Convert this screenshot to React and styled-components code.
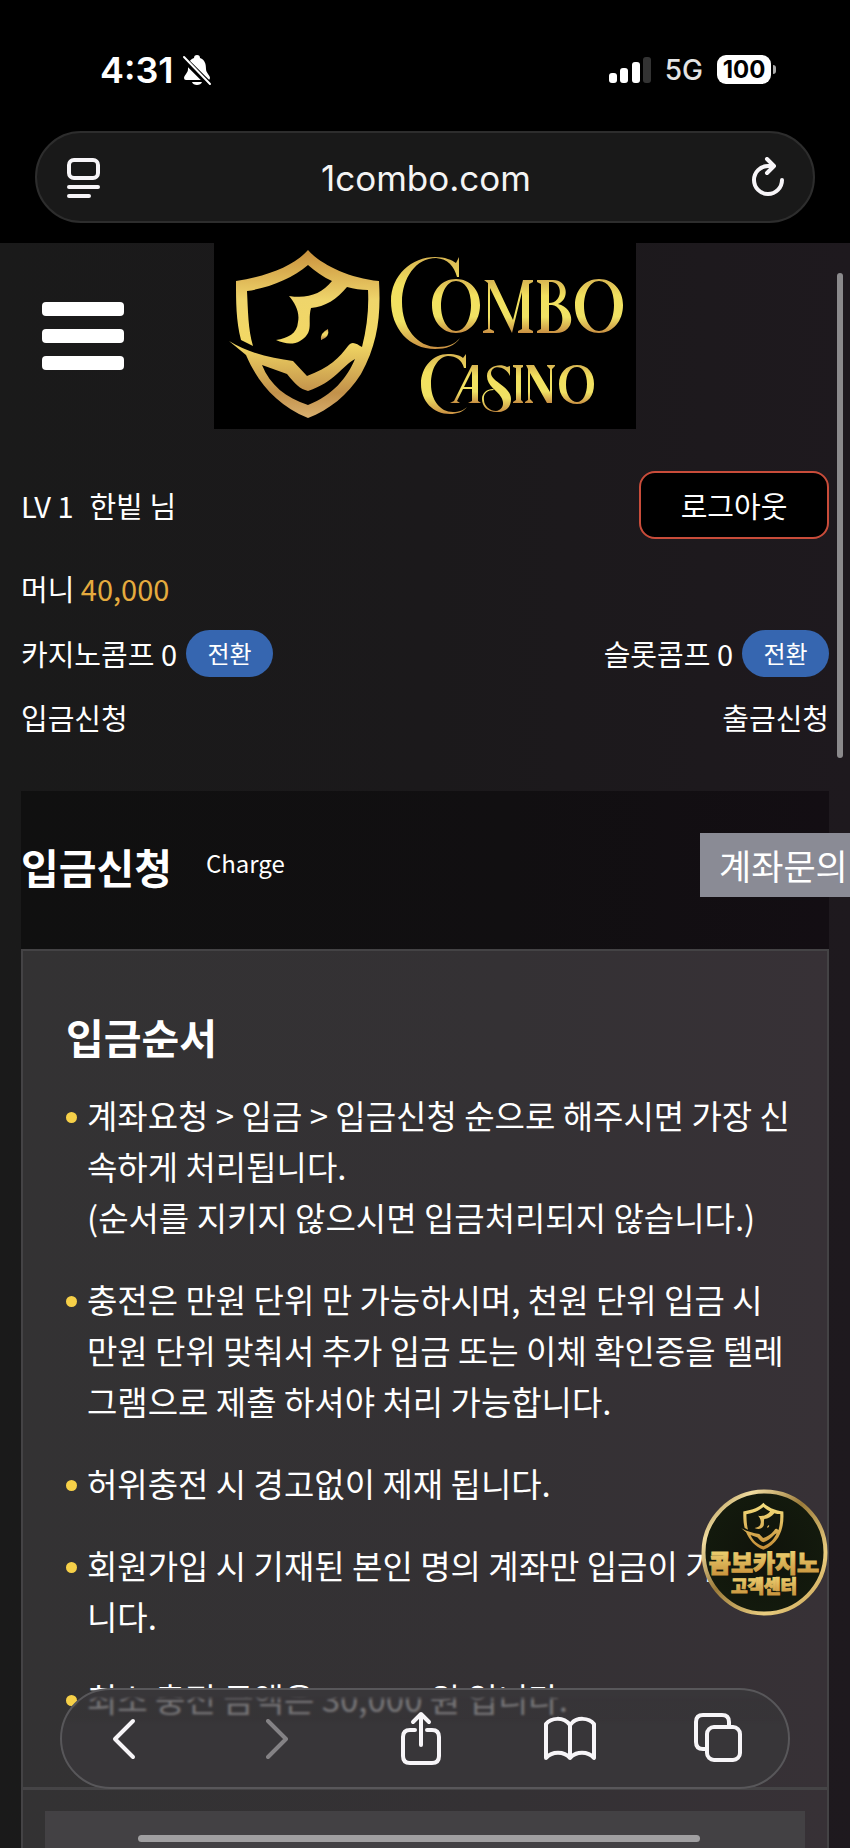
import React from "react";
import styled, { createGlobalStyle } from "styled-components";

const Global = createGlobalStyle`
  *, *::before, *::after { box-sizing: border-box; }
  html { background: #1a1a1a; }
  body { margin: 0; color: #fff; font-family: "Noto Sans CJK KR", "Noto Sans", sans-serif; }
  button { font-family: inherit; color: inherit; cursor: pointer; }
  h1, h2, p, ul { margin: 0; padding: 0; }
  a { color: inherit; text-decoration: none; }
`;

const Screen = styled.div`
  height: 100vh;
  overflow: hidden;
  position: relative;
  display: flex;
  flex-direction: column;
  background: #000;
`;

const StatusBar = styled.header`
  flex: none;
  height: 131px;
  padding: 8px 75px 0 100px;
  display: flex;
  align-items: center;
  justify-content: space-between;
  font-family: Inter, sans-serif;
`;

const StatusGroup = styled.div`
  display: flex;
  align-items: center;
  gap: ${(p) => p.$gap}px;
`;

const Clock = styled.span`
  font-size: 36px;
  font-weight: 600;
`;

const Network = styled.span`
  font-size: 28px;
  font-weight: 500;
  color: #e4e4e4;
`;

const Battery = styled.span`
  position: relative;
  width: 54px;
  height: 29px;
  margin-right: 4px;
  border-radius: 9px;
  background: #fff;
  color: #000;
  font-size: 24px;
  font-weight: 700;
  line-height: 29px;
  text-align: center;
  &::after {
    content: "";
    position: absolute;
    right: -5px;
    top: 10px;
    width: 3px;
    height: 9px;
    border-radius: 0 3px 3px 0;
    background: #aaa;
  }
`;

const AddressBar = styled.div`
  flex: none;
  margin: 0 35px 20px;
  height: 92px;
  padding: 2px 24px 0 28px;
  border: 2px solid #2d2d2d;
  border-radius: 46px;
  background: #191919;
  display: flex;
  align-items: center;
  justify-content: space-between;
  font-family: Inter, sans-serif;
  font-size: 35px;
  color: #f4f4f4;
`;

const IconButton = styled.button`
  display: grid;
  place-items: center;
  padding: 0;
  border: 0;
  background: none;
  opacity: ${(p) => (p.disabled ? 0.4 : 1)};
`;

const Page = styled.main`
  flex: 1;
  min-height: 0;
  overflow: hidden;
  padding: 0 21px;
  background: linear-gradient(90deg, #1a1a1a, #1b191b 50%, #1e191e);
`;

const Brand = styled.div`
  display: grid;
  grid-template-columns: 1fr 422px 1fr;
  align-items: center;
  height: 186px;
`;

const MenuButton = styled.button`
  justify-self: start;
  margin-left: 21px;
  padding: 0;
  border: 0;
  background: none;
  display: grid;
  gap: 13px;
`;

const MenuBar = styled.span`
  width: 82px;
  height: 14px;
  border-radius: 4px;
  background: #fff;
`;

const LogoLink = styled.a`
  display: block;
  height: 186px;
  background: #000;
`;

const Account = styled.section`
  padding-top: 34px;
  height: 362px;
  font-size: 29px;
  line-height: 40px;
`;

const AccountRow = styled.div`
  display: flex;
  align-items: center;
  justify-content: space-between;
  height: ${(p) => p.$height}px;
`;

const AccountItem = styled.span`
  display: flex;
  align-items: center;
  gap: ${(p) => p.$gap || 9}px;
`;

const Amount = styled.span`
  color: #e5ab3e;
`;

const LogoutButton = styled.button`
  width: 190px;
  height: 68px;
  border: 2px solid #c94c3a;
  border-radius: 16px;
  background: #000;
  font-size: 29px;
`;

const ConvertButton = styled.button`
  width: 87px;
  height: 47px;
  padding: 0;
  border: 0;
  border-radius: 24px;
  background: #3666b0;
  font-size: 24px;
  line-height: 46px;
`;

const PageHeader = styled.section`
  height: 158px;
  padding-top: 42px;
  background: linear-gradient(90deg, #101010, #110f11 60%, #130e13);
  display: flex;
  align-items: flex-start;
`;

const Title = styled.h1`
  font-size: 41px;
  font-weight: 700;
  line-height: 66px;
`;

const Subtitle = styled.p`
  margin-left: 34px;
  flex: 1;
  font-size: 24px;
  line-height: 60px;
`;

const InquiryButton = styled.button`
  flex: none;
  width: 167px;
  height: 64px;
  margin-right: -38px;
  padding: 0 19px;
  border: 0;
  background: #8a8b95;
  text-align: left;
  white-space: nowrap;
  font-size: 35px;
  line-height: 64px;
`;

const Panel = styled.section`
  border: 2px solid #444345;
  background: linear-gradient(90deg, #333233, #343134 60%, #373136);
`;

const Guide = styled.div`
  height: 839px;
  padding: 54px 32px 0 43px;
  border-bottom: 3px solid #454446;
`;

const GuideTitle = styled.h2`
  font-size: 41px;
  line-height: 62px;
`;

const GuideList = styled.ul`
  margin-top: 23px;
  list-style: none;
  display: grid;
  gap: 31px;
  font-size: 33px;
  line-height: 51px;
`;

const GuideItem = styled.li`
  display: grid;
  grid-template-columns: 10px 1fr;
  column-gap: 11px;
  &::before {
    content: "";
    width: 11px;
    height: 11px;
    margin-top: 22px;
    border-radius: 50%;
    background: #f6d048;
  }
`;

const FormArea = styled.div`
  height: 120px;
  margin: 21px 22px 0;
  background: #434144;
`;

const ScrollThumb = styled.div`
  position: absolute;
  right: 7px;
  top: 273px;
  width: 6px;
  height: 485px;
  border-radius: 3px;
  background: #8b8a8c;
`;

const SupportLink = styled.a`
  position: absolute;
  right: 22px;
  bottom: 232px;
  width: 127px;
  height: 127px;
`;

const Toolbar = styled.nav`
  position: absolute;
  left: 60px;
  right: 60px;
  bottom: 59px;
  height: 101px;
  padding: 0 40px 0 32px;
  border: 2px solid #58575a;
  border-radius: 51px;
  background: linear-gradient(#383639 6px, #383639b0 11px, #383639b0 28px, #383639 34px);
  backdrop-filter: blur(1px);
  display: flex;
  align-items: center;
  justify-content: space-between;
`;

const ToolButton = styled(IconButton)`
  width: 60px;
`;

const HomeIndicator = styled.div`
  position: absolute;
  left: 138px;
  right: 150px;
  bottom: 6px;
  height: 7px;
  border-radius: 4px;
  background: #a09fa1;
`;

const gradientStops = (
  <>
    <stop offset="0" stopColor="#c9903c" />
    <stop offset=".3" stopColor="#efd56b" />
    <stop offset=".55" stopColor="#f2d864" />
    <stop offset=".85" stopColor="#c2914a" />
    <stop offset="1" stopColor="#d9b070" />
  </>
);

const Shield = ({ fill }) => (
  <g fill={fill}>
    <path d="M98 10C109 23 137 38 169 41C171 75 168 103 151 134C138 155 119 170 98 178C67 165 48 143 36 115L19 101C40 114 63 118 83 121L97 136C119 128 130 117 138 106C142 100 147 104 152 107C157 88 159 68 158 50C151 50 144 49 137 47C127 59 115 67 101 68C97 83 105 92 90 101C83 105 75 104 66 100C78 98 87 94 88 82C90 72 85 63 79 56C98 59 111 54 122 41C113 37 105 31 98 25C83 38 59 48 37 51C38 70 38 89 43 106L31 100C26 81 26 61 26 41C59 36 85 25 98 10ZM52 125C60 145 76 158 98 165C123 155 137 138 145 119C132 126 125 142 98 151C90 149 85 144 77 134Z" fillRule="evenodd" />
    <path d="M118 89Q120 97 111 100Q110 93 118 89Z" />
  </g>
);

const Logo = () => (
  <svg width="422" height="186" viewBox="4 3 422 186" role="img" aria-label="Combo Casino">
    <defs>
      <linearGradient id="shieldGold" x1="0" y1="0" x2="0" y2="1">{gradientStops}</linearGradient>
      <linearGradient id="letterGold" x1="0" y1="0" x2="0" y2="1">
        <stop offset="0" stopColor="#d8b552" />
        <stop offset=".3" stopColor="#f2e05e" />
        <stop offset=".7" stopColor="#f0e264" />
        <stop offset="1" stopColor="#c98f42" />
      </linearGradient>
    </defs>
    <Shield fill="url(#shieldGold)" />
    <g fill="url(#letterGold)">
      <path d="M249 17V37H247C244 26 238 19 226 18C206 18 192 38 192 62C192 88 207 107 228 107C238 107 245 104 250 98C245 106 236 109 225 109C199 109 181 88 181 61C181 35 202 17 225 17C235 17 242 20 246 23Z" />
      <path d="M256 114V128H254C252 120 246 116 238 116C228 117 221 128 221 144C221 160 230 172 243 172C249 172 254 170 257 167C253 172 247 174 240 174C223 174 211 161 211 144C211 127 223 114 238 114C246 114 251 116 253 118Z" />
      <path fillRule="evenodd" d="M246 39C260 39 270 50 270 65C270 81 260 93 246 93C232 93 222 81 222 65C222 50 232 39 246 39ZM246 41C237 41 231 52 231 66C231 80 238 91 246 91C255 91 261 79 261 65C261 50 255 41 246 41Z" />
      <path fillRule="evenodd" d="M389 39C403 39 413 50 413 65C413 81 403 93 389 93C375 93 365 81 365 65C365 50 375 39 389 39ZM389 41C380 41 374 52 374 66C374 80 381 91 389 91C398 91 404 79 404 65C404 50 398 41 389 41Z" />
      <path d="M274 40H284L303 80L313 40H323V42L319 44V89L323 91V93H308V91L312 89V52L302 93L280 48V89L284 91V93H273V91L278 89V43Z" />
      <path fillRule="evenodd" d="M327 40H343C358 40 360 59 348 64C366 68 366 93 346 93H327V91L331 89V44L327 42ZM339 42V63C353 63 353 43 342 42ZM339 65V91H344C356 89 355 67 342 65Z" />
      <path fillRule="evenodd" d="M262 125H268V161L271 163H258L262 161V149H253L247 161L250 163H240L244 161ZM262 131L254 147H262Z" />
      <path d="M300 126V136C296 126 282 124 281 133C281 142 301 146 301 159C301 168 295 172 287 172C277 172 272 166 272 159C272 153 277 149 283 149L284 150C277 150 273 154 274 160C274 166 280 171 286 171C293 170 295 163 291 157C287 150 277 146 277 136C277 126 290 123 297 127Z" />
      <path d="M303 125H313V127L311 128V160L313 162V163H303V162L306 160V128L303 127Z" />
      <path d="M316 125H324L340 152V129L337 126V125H345V126L342 129V163H337L320 133V159L323 162V163H315V162L318 160V129Z" />
      <path fillRule="evenodd" d="M367 125C378 125 384 133 384 144C384 156 378 164 367 164C356 164 349 156 349 144C349 133 356 125 367 125ZM367 127C360 127 356 134 356 145C356 155 361 162 367 162C373 162 377 154 377 144C377 134 373 127 367 127Z" />
    </g>
  </svg>
);

const SupportBadge = () => (
  <svg width="127" height="127" viewBox="0 0 127 127" role="img" aria-label="콤보카지노 고객센터">
    <defs>
      <linearGradient id="ring" x1="0" y1="0" x2="1" y2="1">
        <stop offset="0" stopColor="#8d7434" />
        <stop offset=".2" stopColor="#f1dca0" />
        <stop offset=".45" stopColor="#9b7b3a" />
        <stop offset=".75" stopColor="#e9cd80" />
        <stop offset="1" stopColor="#c19a4b" />
      </linearGradient>
      <linearGradient id="badgeText" x1="0" y1="0" x2="0" y2="1">
        <stop offset="0" stopColor="#f6e07e" />
        <stop offset="1" stopColor="#c48b35" />
      </linearGradient>
      <radialGradient id="badgeFill">
        <stop offset="0" stopColor="#10130b" />
        <stop offset="1" stopColor="#131a0d" />
      </radialGradient>
    </defs>
    <circle cx="63.500" cy="63.500" r="61" fill="url(#badgeFill)" stroke="url(#ring)" strokeWidth="4" />
    <g transform="translate(35 11) scale(.28)"><Shield fill="url(#badgeText)" /></g>
    <g fill="url(#badgeText)" stroke="url(#badgeText)" fontFamily="Noto Sans CJK KR, sans-serif" fontWeight="900" textAnchor="middle">
      <text x="63" y="83" fontSize="24" strokeWidth="1">콤보카지노</text>
      <text x="63" y="104" fontSize="18" strokeWidth="1">고객센터</text>
    </g>
  </svg>
);

const Line = ({ size, w = 4, children }) => (
  <svg width={size} height={size} viewBox={`0 0 ${size} ${size}`} fill="none" stroke="#f7f5f8" strokeWidth={w} strokeLinecap="round" strokeLinejoin="round" aria-hidden="true">
    {children}
  </svg>
);

const MutedBell = () => (
  <svg width="30" height="32" viewBox="0 0 30 32" fill="#fff" aria-hidden="true">
    <path d="M15 1C17 1 18 2 18 4C23 6 24 10 24 15C24 19 28 21 28 24Q28 26 26 26H4Q2 26 2 24C2 21 6 19 6 15C6 10 7 6 12 4C12 2 13 1 15 1ZM10 28H20C19 32 11 32 10 28Z" />
    <path d="M1 4L29 32" stroke="#000" strokeWidth="6" />
    <path d="M2 3L28 30" stroke="#fff" strokeWidth="2" strokeLinecap="round" />
  </svg>
);

const Signal = () => (
  <svg width="42" height="28" viewBox="0 0 42 28" fill="#fff" aria-hidden="true">
    <rect x="0" y="17" width="8" height="10" rx="3" />
    <rect x="11" y="12" width="8" height="15" rx="3" />
    <rect x="23" y="6" width="8" height="21" rx="3" />
    <rect x="34" y="1" width="8" height="26" rx="3" fill="#333" />
  </svg>
);

const guide = [
  ["계좌요청 > 입금 > 입금신청 순으로 해주시면 가장 신속하게 처리됩니다.", "(순서를 지키지 않으시면 입금처리되지 않습니다.)"],
  ["충전은 만원 단위 만 가능하시며, 천원 단위 입금 시 만원 단위 맞춰서 추가 입금 또는 이체 확인증을 텔레그램으로 제출 하셔야 처리 가능합니다."],
  ["허위충전 시 경고없이 제재 됩니다."],
  ["회원가입 시 기재된 본인 명의 계좌만 입금이 가능합니다."],
  ["최소 충전 금액은 30,000 원 입니다."],
];

export default function App() {
  return (
    <Screen>
      <Global />
      <StatusBar>
        <StatusGroup $gap={8}>
          <Clock>4:31</Clock>
          <MutedBell />
        </StatusGroup>
        <StatusGroup $gap={14}>
          <Signal />
          <Network>5G</Network>
          <Battery>100</Battery>
        </StatusGroup>
      </StatusBar>
      <AddressBar>
        <IconButton aria-label="페이지 메뉴">
          <Line size={40}>
            <rect x="4" y="2" width="29" height="18" rx="5" />
            <path d="M4 29H33M4 38H24" />
          </Line>
        </IconButton>
        <span>1combo.com</span>
        <IconButton aria-label="새로고침">
          <Line size={42}>
            <path d="M26 9H21A14 14 0 1 0 35 23M20 2L27 9L20 16" />
          </Line>
        </IconButton>
      </AddressBar>

      <Page>
        <Brand>
          <MenuButton aria-label="메뉴">
            <MenuBar />
            <MenuBar />
            <MenuBar />
          </MenuButton>
          <LogoLink href="#"><Logo /></LogoLink>
        </Brand>

        <Account>
          <AccountRow $height={84}>
            <AccountItem $gap={16}>
              <span>LV 1</span>
              <span>한빝 님</span>
            </AccountItem>
            <LogoutButton>로그아웃</LogoutButton>
          </AccountRow>
          <AccountRow $height={82}>
            <span>머니 <Amount>40,000</Amount></span>
          </AccountRow>
          <AccountRow $height={48}>
            <AccountItem>카지노콤프 0 <ConvertButton>전환</ConvertButton></AccountItem>
            <AccountItem>슬롯콤프 0 <ConvertButton>전환</ConvertButton></AccountItem>
          </AccountRow>
          <AccountRow $height={80}>
            <a href="#">입금신청</a>
            <a href="#">출금신청</a>
          </AccountRow>
        </Account>

        <PageHeader>
          <Title>입금신청</Title>
          <Subtitle>Charge</Subtitle>
          <InquiryButton>계좌문의</InquiryButton>
        </PageHeader>

        <Panel>
          <Guide>
            <GuideTitle>입금순서</GuideTitle>
            <GuideList>
              {guide.map((lines) => (
                <GuideItem key={lines[0]}>
                  <div>
                    {lines.map((line) => <p key={line}>{line}</p>)}
                  </div>
                </GuideItem>
              ))}
            </GuideList>
          </Guide>
          <FormArea />
        </Panel>
      </Page>

      <ScrollThumb />
      <SupportLink href="#"><SupportBadge /></SupportLink>
      <Toolbar>
        <ToolButton aria-label="뒤로">
          <Line size={44}><path d="M31 4L13 22L31 40" /></Line>
        </ToolButton>
        <ToolButton aria-label="앞으로" disabled>
          <Line size={44}><path d="M17 4L35 22L17 40" /></Line>
        </ToolButton>
        <ToolButton aria-label="공유">
          <Line size={56}>
            <path d="M22 19H17Q10 19 10 26V45Q10 52 17 52H39Q46 52 46 45V26Q46 19 39 19H34M28 34V3M20 11L28 3L36 11" />
          </Line>
        </ToolButton>
        <ToolButton aria-label="책갈피">
          <Line size={54}>
            <path d="M27 13C20 4 8 6 3 12V46C9 39 21 39 27 46C33 39 45 39 51 46V12C46 6 34 4 27 13V46" />
          </Line>
        </ToolButton>
        <ToolButton aria-label="탭">
          <Line size={52}>
            <rect x="15" y="14" width="33" height="33" rx="7" />
            <path d="M14 36H11Q4 36 4 29V9Q4 2 11 2H30Q37 2 37 9V13" />
          </Line>
        </ToolButton>
      </Toolbar>
      <HomeIndicator />
    </Screen>
  );
}
